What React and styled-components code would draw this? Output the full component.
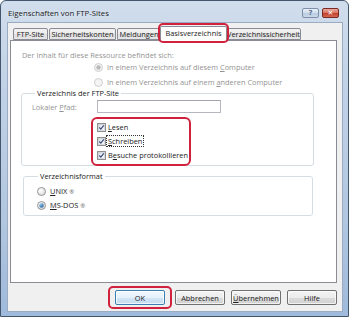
import React from 'react';
import styled, { createGlobalStyle } from 'styled-components';

const Global = createGlobalStyle`
  html, body { margin: 0; padding: 0; background: #fff; }
  body {
    width: 349px; height: 317px; overflow: hidden;
    font-family: "Open Sans", "Noto Sans", sans-serif;
    -webkit-font-smoothing: antialiased;
  }
  * { box-sizing: border-box; }
`;

const FONT = 7.4;

const Window = styled.div`
  width: 349px;
  height: 317px;
  border: 1px solid #44566e;
  border-radius: 6px 6px 0 0;
  background: linear-gradient(180deg, #d0ddec 0%, #bfd1e6 30%, #b1c6df 70%, #9fbadb 100%);
  display: flex;
  flex-direction: column;
  overflow: hidden;
`;

const TitleBar = styled.div`
  height: 21px;
  display: flex;
  align-items: flex-start;
  padding-left: 7px;
`;

const TitleText = styled.div`
  font-size: 7.8px;
  line-height: 10px;
  margin-top: 7px;
  color: #1a1a1a;
  flex: 1;
  text-shadow: 0 0 4px rgba(255,255,255,0.9);
`;

const CaptionButton = styled.div`
  width: 17px;
  height: 10px;
  margin-top: 7px;
  margin-left: ${p => (p.$close ? '3px' : '0')};
  margin-right: ${p => (p.$close ? '9px' : '0')};
  border: 1px solid ${p => (p.$close ? '#7a2a22' : '#7d8fa8')};
  border-radius: 2px;
  background: ${p =>
    p.$close
      ? 'linear-gradient(180deg, #e9a99c 0%, #d87a6a 45%, #c4402f 55%, #cf6a52 100%)'
      : 'linear-gradient(180deg, #e8eff8 0%, #d3dfee 45%, #bccde3 55%, #c9d8ea 100%)'};
  display: flex;
  align-items: center;
  justify-content: center;
  color: ${p => (p.$close ? '#fff' : '#5c6f8a')};
  font-family: "DejaVu Sans", sans-serif;
  font-size: 7px;
  font-weight: bold;
  line-height: 1;
`;

const Client = styled.div`
  flex: 1;
  margin: 0 5px 4px 6px;
  background: #f0f0f0;
  border: 1px solid #9aabc2;
  display: flex;
  flex-direction: column;
  padding: 5px 5px 0 2px;
`;

const TabStrip = styled.div`
  display: flex;
  align-items: flex-end;
  height: 12px;
  padding-left: 3px;
  position: relative;
  z-index: 2;
`;

const Tab = styled.div`
  position: relative;
  width: ${p => p.$w}px;
  height: ${p => (p.$active ? 15 : 12)}px;
  margin-right: ${p => (p.$gap ?? 1)}px;
  margin-left: ${p => p.$ml ?? 0}px;
  margin-bottom: ${p => (p.$active ? -1 : 0)}px;
  border: 1px solid #898c95;
  border-bottom: ${p => (p.$active ? 'none' : '1px solid #898c95')};
  border-radius: 2px 2px 0 0;
  background: ${p =>
    p.$active ? '#fff' : 'linear-gradient(180deg, #f3f3f3 0%, #ebebeb 50%, #dedede 51%, #e6e6e6 100%)'};
  z-index: ${p => (p.$active ? 2 : 1)};
  font-size: ${FONT}px;
  line-height: 10px;
  color: #222;
  display: flex;
  align-items: center;
  justify-content: center;
  white-space: nowrap;
  padding-bottom: ${p => (p.$active ? '2px' : '0')};

  &::after {
    content: ${p => (p.$marked ? '""' : 'none')};
    position: absolute;
    left: -3px;
    right: -3px;
    top: -4px;
    bottom: -2px;
    border: 2px solid #d0213d;
    border-radius: 5px;
    pointer-events: none;
  }
`;

const TabLabel = styled.span`
  display: block;
  overflow: hidden;
  max-width: 100%;
  text-align: center;
`;

const Panel = styled.div`
  height: 243px;
  background: #fff;
  border: 1px solid #898c95;
  padding: 9px 0 0 11px;
  display: flex;
  flex-direction: column;
  align-items: flex-start;
  position: relative;
  z-index: 1;
`;

const Text = styled.div`
  font-size: ${FONT}px;
  line-height: 10px;
  color: ${p => (p.$disabled ? '#949494' : '#222')};
  white-space: nowrap;
`;

const OptionRow = styled.label`
  display: flex;
  align-items: center;
  gap: ${p => p.$gap ?? 4}px;
  height: 12px;
  margin-left: ${p => p.$indent ?? 0}px;
  margin-top: ${p => p.$mt ?? 0}px;
  font-size: ${FONT}px;
  line-height: 10px;
  color: ${p => (p.$disabled ? '#949494' : '#222')};
  white-space: nowrap;
`;

const Group = styled.fieldset`
  margin: ${p => p.$mt}px 0 0 ${p => p.$ml}px;
  width: ${p => p.$w}px;
  min-inline-size: 0;
  border: 1px solid #d5dde3;
  border-radius: 3px;
  padding: ${p => p.$pad};
  display: flex;
  flex-direction: column;
  align-items: flex-start;
`;

const Legend = styled.legend`
  font-size: ${FONT}px;
  line-height: 10px;
  color: #222;
  padding: 0 2px;
  margin-left: ${p => p.$ml}px;
`;

const FieldRow = styled.div`
  display: flex;
  align-items: center;
  height: 13px;
`;

const FieldLabel = styled.span`
  width: 65px;
  font-size: ${FONT}px;
  line-height: 10px;
  color: #949494;
`;

const TextInput = styled.div`
  width: 124px;
  height: 13px;
  border: 1px solid #b5b8bf;
  border-top-color: #a3a6ad;
  background: #fff;
`;

const CheckGroup = styled.div`
  margin: 4px 0 -1px 59px;
  width: 100px;
  border: 2px solid #d0213d;
  border-radius: 6px;
  padding: 2px 0 3px 4px;
  display: flex;
  flex-direction: column;
  gap: 2px;
`;

const Acc = styled.span`
  text-decoration: underline;
  text-underline-offset: 1px;
`;

const Focus = styled.span`
  outline: 1px dotted #333;
  outline-offset: 0px;
  padding: 0 1px;
`;

const Reg = styled.span`
  font-size: 6px;
  margin-left: 2px;
  color: #666;
`;

const ButtonRow = styled.div`
  display: flex;
  justify-content: flex-end;
  gap: 6px;
  margin-top: 7px;
`;

const Button = styled.div`
  position: relative;
  width: 50px;
  height: 15px;
  margin-right: ${p => (p.$default ? 4 : 0)}px;
  border: 1px solid ${p => (p.$default ? '#3c7fb1' : '#707070')};
  border-radius: 2px;
  background: ${p =>
    p.$default
      ? 'linear-gradient(180deg, #f2f8fd 0%, #e5f1fb 50%, #d2e6f5 51%, #c6def2 100%)'
      : 'linear-gradient(180deg, #f3f3f3 0%, #ececec 50%, #dddddd 51%, #d0d0d0 100%)'};
  box-shadow: inset 0 0 0 1px rgba(255,255,255,0.7);
  font-size: ${FONT}px;
  line-height: 10px;
  color: #222;
  display: flex;
  align-items: center;
  justify-content: center;

  &::after {
    content: ${p => (p.$marked ? '""' : 'none')};
    position: absolute;
    left: -8px;
    right: -8px;
    top: -5px;
    bottom: -5px;
    border: 2px solid #d0213d;
    border-radius: 5px;
    pointer-events: none;
  }
`;

const CheckIcon = () => (
  <svg width="9" height="9" viewBox="0 0 9 9" style={{ flex: 'none' }}>
    <defs>
      <linearGradient id="cbIn" x1="0" y1="0" x2="1" y2="1">
        <stop offset="0" stopColor="#d9dde4" />
        <stop offset="1" stopColor="#fbfbfc" />
      </linearGradient>
    </defs>
    <rect x="0.5" y="0.5" width="8" height="8" fill="#f5f5f5" stroke="#8e8f8f" />
    <rect x="1.5" y="1.5" width="6" height="6" fill="url(#cbIn)" stroke="#c3c7cf" strokeWidth="0.6" />
    <path d="M2.3 4.5 L3.8 6.1 L6.8 2.3" fill="none" stroke="#34487a" strokeWidth="1.1" strokeLinejoin="round" />
  </svg>
);

const RadioIcon = ({ checked, disabled }) => {
  const ring = disabled ? '#c8c8c8' : '#8a8a8a';
  const dot = disabled ? '#b9b9b9' : '#1f5f9e';
  return (
    <svg width="9" height="9" viewBox="0 0 9 9" style={{ flex: 'none' }}>
      <defs>
        <radialGradient id="rdFill" cx="0.35" cy="0.35" r="0.7">
          <stop offset="0" stopColor="#ffffff" />
          <stop offset="1" stopColor="#dcdcdc" />
        </radialGradient>
        <radialGradient id="rdDot" cx="0.35" cy="0.3" r="0.8">
          <stop offset="0" stopColor="#8fc4ef" />
          <stop offset="1" stopColor="#1c5a96" />
        </radialGradient>
      </defs>
      <circle cx="4.5" cy="4.5" r="4" fill={disabled ? '#f4f4f4' : 'url(#rdFill)'} stroke={ring} strokeWidth="0.9" />
      {checked && <circle cx="4.5" cy="4.5" r="2.2" fill={disabled ? dot : 'url(#rdDot)'} />}
    </svg>
  );
};

const tabs = [
  { label: 'FTP-Site', w: 35 },
  { label: 'Sicherheitskonten', w: 67 },
  { label: 'Meldungen', w: 44, gap: 0 },
  { label: 'Basisverzeichnis', w: 67, active: true, marked: true, ml: -1, gap: 0 },
  { label: 'Verzeichnissicherheit', w: 75, ml: -1 },
];

export default function App() {
  return (
    <>
      <Global />
      <Window>
        <TitleBar>
          <TitleText>Eigenschaften von FTP-Sites</TitleText>
          <CaptionButton>?</CaptionButton>
          <CaptionButton $close>✕</CaptionButton>
        </TitleBar>
        <Client>
          <TabStrip>
            {tabs.map(t => (
              <Tab key={t.label} $w={t.w} $active={t.active} $marked={t.marked} $ml={t.ml} $gap={t.gap}>
                <TabLabel>{t.label}</TabLabel>
              </Tab>
            ))}
          </TabStrip>
          <Panel>
            <Text $disabled>Der Inhalt für diese Ressource befindet sich:</Text>
            <OptionRow $disabled $indent={72} $mt={1} $gap={4}>
              <RadioIcon checked disabled />
              <span>In einem Verzeichnis auf diesem <Acc>C</Acc>omputer</span>
            </OptionRow>
            <OptionRow $disabled $indent={72} $mt={3} $gap={4}>
              <RadioIcon disabled />
              <span>In einem Verzeichnis auf einem <Acc>a</Acc>nderen Computer</span>
            </OptionRow>

            <Group $mt={0} $ml={-1} $w={293} $pad="2px 0 0 10px">
              <Legend $ml={3}>Verzeichnis der FTP-Site</Legend>
              <FieldRow>
                <FieldLabel>Lokaler <Acc>P</Acc>fad:</FieldLabel>
                <TextInput />
              </FieldRow>
              <CheckGroup>
                <OptionRow $gap={2}>
                  <CheckIcon />
                  <span><Acc>L</Acc>esen</span>
                </OptionRow>
                <OptionRow $gap={1}>
                  <CheckIcon />
                  <Focus><Acc>S</Acc>chreiben</Focus>
                </OptionRow>
                <OptionRow $gap={2}>
                  <CheckIcon />
                  <span>B<Acc>e</Acc>suche protokollieren</span>
                </OptionRow>
              </CheckGroup>
            </Group>

            <Group $mt={5} $ml={1} $w={290} $pad="4px 0 4px 13px">
              <Legend $ml={1}>Verzeichnisformat</Legend>
              <OptionRow $gap={4}>
                <RadioIcon />
                <span><Acc>U</Acc>NIX<Reg>®</Reg></span>
              </OptionRow>
              <OptionRow $gap={4} $mt={2}>
                <RadioIcon checked />
                <span><Acc>M</Acc>S-DOS<Reg>®</Reg></span>
              </OptionRow>
            </Group>
          </Panel>
          <ButtonRow>
            <Button $default $marked>OK</Button>
            <Button>Abbrechen</Button>
            <Button><Acc>Ü</Acc>bernehmen</Button>
            <Button>Hilfe</Button>
          </ButtonRow>
        </Client>
      </Window>
    </>
  );
}
